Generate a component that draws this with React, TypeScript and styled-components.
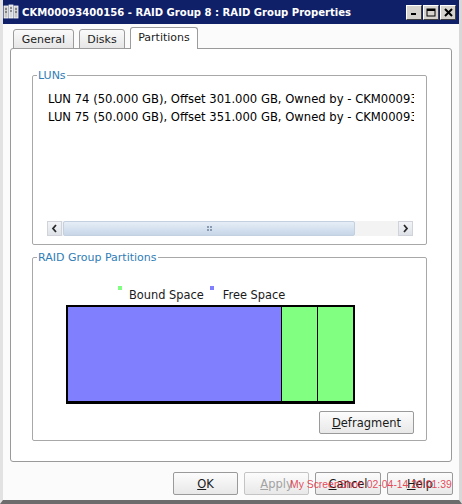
import styled, { createGlobalStyle } from "styled-components";

const GlobalStyle = createGlobalStyle`
    html, body {
        margin: 0;
        padding: 0;
        background: #ffffff;
    }
    body {
        font-family: "DejaVu Sans", Verdana, sans-serif;
        font-size: 11px;
        color: #000000;
    }
    * {
        box-sizing: border-box;
    }
`;

const Window = styled.div`
    position: relative;
    width: 462px;
    height: 504px;
    display: flex;
    flex-direction: column;
    background: #fbfbfb;
    border-left: 3px solid #e2e2e2;
    border-right: 3px solid #d8d8d8;
    border-bottom: 4px solid #6c6c6c;
    overflow: hidden;
`;

const TitleBar = styled.div`
    height: 24px;
    margin: 0 -3px;
    padding: 0 4px 0 3px;
    display: flex;
    align-items: center;
    background: #0f1f68;
    color: #ffffff;
    font-family: "DejaVu Sans Condensed", "DejaVu Sans", sans-serif;
    font-weight: bold;
    font-size: 11.2px;
`;

const TitleText = styled.span`
    flex: 1;
    margin-left: 3px;
    white-space: nowrap;
`;

const CaptionButtons = styled.div`
    display: flex;
    gap: 1px;
    margin-right: 2px;
`;

const CaptionButton = styled.div`
    width: 16px;
    height: 15px;
    background: #d6d3ce;
    border: 1px solid;
    border-color: #ffffff #404040 #404040 #ffffff;
    display: flex;
    align-items: center;
    justify-content: center;
`;

const Body = styled.div`
    flex: 1;
    display: flex;
    flex-direction: column;
    padding: 3px 7px 0 7px;
`;

const TabRow = styled.div`
    display: flex;
    align-items: flex-end;
    gap: 5px;
    padding-left: 3px;
    height: 22px;
    position: relative;
    z-index: 1;
    margin-bottom: -1px;
`;

const Tab = styled.div<{ $active?: boolean; $w: number }>`
    width: ${ p => p.$w }px;
    height: ${ p => p.$active ? '22px' : '20px' };
    display: flex;
    justify-content: center;
    align-items: ${ p => p.$active ? 'flex-start' : 'center' };
    padding-top: ${ p => p.$active ? '3px' : '1px' };
    border: 1px solid #9c9c9c;
    border-bottom: ${ p => p.$active ? 'none' : '1px solid #9c9c9c' };
    border-radius: 3px 3px 0 0;
    background: ${ p => p.$active ? '#ffffff' : 'linear-gradient(#fafafa, #e6e6e6)' };
    color: #1c1c1c;
    white-space: nowrap;
`;

const TabPanel = styled.div`
    height: 414px;
    border: 1px solid #9a9a9a;
    border-radius: 3px;
    background: #ffffff;
    padding: 20px 24px 0 21px;
    display: flex;
    flex-direction: column;
`;

const GroupBox = styled.fieldset<{ $top?: number }>`
    margin: ${ p => p.$top ?? 0 }px 0 0 0;
    padding: 0;
    border: 1px solid #a8a8a8;
    border-radius: 2px;
    min-width: 0;
`;

const GroupLabel = styled.legend`
    margin-left: 4px;
    padding: 0 1px;
    color: #2f7db6;
    line-height: 13px;
`;

const LunList = styled.div`
    height: 139px;
    margin: 0 12px 0 15px;
    padding-top: 8px;
    overflow: hidden;
    white-space: nowrap;
    font-size: 11.6px;
`;

const LunRow = styled.div`
    line-height: 18px;
`;

const ScrollBar = styled.div`
    height: 15px;
    margin: 0 13px 8px 14px;
    display: flex;
    background: #f3f3f3;
`;

const ScrollArrow = styled.div`
    width: 15px;
    height: 15px;
    background: linear-gradient(#f2f4f7, #dfe3e9);
    border: 1px solid #d0d4da;
    display: flex;
    align-items: center;
    justify-content: center;
`;

const ScrollTrack = styled.div`
    flex: 1;
    display: flex;
    padding: 0 1px;
`;

const ScrollThumb = styled.div`
    width: 292px;
    height: 15px;
    border: 1px solid #c2d0e0;
    border-radius: 2px;
    background: linear-gradient(#e6eef7, #c7d6e8);
    display: flex;
    align-items: center;
    justify-content: center;
`;

const LegendRow = styled.div`
    display: flex;
    align-items: flex-start;
    padding: 24px 0 0 85px;
    line-height: 14px;
    font-size: 11.4px;
    color: #1a1a1a;
`;

const Swatch = styled.div<{ $color: string; $gap: number }>`
    width: 4px;
    height: 4px;
    margin-top: -2px;
    margin-left: ${ p => p.$gap }px;
    margin-right: ${ p => p.$gap === 0 ? 7 : 9 }px;
    background: ${ p => p.$color };
`;

const Bar = styled.div`
    margin: 3px 0 0 33px;
    width: 289px;
    height: 99px;
    display: flex;
    border: 2px solid #000000;
    border-bottom-width: 3px;
`;

const Segment = styled.div<{ $color: string; $width: number }>`
    width: ${ p => p.$width }px;
    background: ${ p => p.$color };
    & + & {
        border-left: 1px solid #000000;
    }
`;

const ButtonRow = styled.div<{ $pad?: number }>`
    display: flex;
    justify-content: flex-end;
    gap: 6px;
    padding-right: ${ p => p.$pad ?? 0 }px;
`;

const DefragRow = styled(ButtonRow)`
    margin-top: 7px;
    padding-bottom: 6px;
`;

const Button = styled.div<{ $w: number; $disabled?: boolean }>`
    width: ${ p => p.$w }px;
    height: 23px;
    display: flex;
    align-items: center;
    justify-content: center;
    border: 1px solid ${ p => p.$disabled ? '#c4c4c4' : '#9a9a9a' };
    border-radius: 2px;
    background: linear-gradient(#fcfcfc, #e8e8e8);
    color: ${ p => p.$disabled ? '#a2a2a2' : '#1a1a1a' };
    font-size: 11.5px;
`;

const Footer = styled(ButtonRow)`
    margin-top: 10px;
    margin-right: -1px;
`;

const Watermark = styled.div`
    position: absolute;
    left: 287px;
    top: 479px;
    font-family: "Liberation Sans", Arial, sans-serif;
    font-size: 10.4px;
    color: rgba(226, 40, 60, 0.85);
    white-space: nowrap;
    pointer-events: none;
`;

function AppIcon() {
    return (
        <svg width="16" height="16" viewBox="0 0 16 16">
            <rect x="1" y="2" width="4" height="12" fill="#c8c8c8" stroke="#ffffff" strokeWidth="0.8" />
            <rect x="6" y="1" width="4" height="13" fill="#d8d8d8" stroke="#ffffff" strokeWidth="0.8" />
            <rect x="11" y="2" width="4" height="12" fill="#c8c8c8" stroke="#ffffff" strokeWidth="0.8" />
            <path d="M2 5h2M7 4h2M12 5h2M2 8h2M7 7h2M12 8h2" stroke="#404040" strokeWidth="1" />
        </svg>
    );
}

function Chevron({ dir }: { dir: 'left' | 'right' }) {
    return (
        <svg width="7" height="9" viewBox="0 0 7 9">
            <path
                d={ dir === 'left' ? "M5 1L2 4.5L5 8" : "M2 1L5 4.5L2 8" }
                stroke="#2a2a2a"
                strokeWidth="1.8"
                fill="none"
            />
        </svg>
    );
}

function App() {
    return (
        <>
            <GlobalStyle />
            <Window>
                <TitleBar>
                    <AppIcon />
                    <TitleText>CKM00093400156 - RAID Group 8 : RAID Group Properties</TitleText>
                    <CaptionButtons>
                        <CaptionButton>
                            <svg width="8" height="8" viewBox="0 0 8 8"><rect x="1" y="5" width="5" height="2" fill="#000" /></svg>
                        </CaptionButton>
                        <CaptionButton>
                            <svg width="10" height="9" viewBox="0 0 10 9"><rect x="1" y="1" width="8" height="7" fill="none" stroke="#000" strokeWidth="1" /><rect x="1" y="1" width="8" height="2" fill="#000" /></svg>
                        </CaptionButton>
                        <CaptionButton>
                            <svg width="9" height="9" viewBox="0 0 9 9"><path d="M1 1L8 8M8 1L1 8" stroke="#000" strokeWidth="2" /></svg>
                        </CaptionButton>
                    </CaptionButtons>
                </TitleBar>
                <Body>
                    <TabRow>
                        <Tab $w={ 61 }>General</Tab>
                        <Tab $w={ 46 }>Disks</Tab>
                        <Tab $w={ 68 } $active>Partitions</Tab>
                    </TabRow>
                    <TabPanel>
                        <GroupBox>
                            <GroupLabel>LUNs</GroupLabel>
                            <LunList>
                                <LunRow>LUN 74 (50.000 GB), Offset 301.000 GB, Owned by - CKM00093400156</LunRow>
                                <LunRow>LUN 75 (50.000 GB), Offset 351.000 GB, Owned by - CKM00093400156</LunRow>
                            </LunList>
                            <ScrollBar>
                                <ScrollArrow><Chevron dir="left" /></ScrollArrow>
                                <ScrollTrack>
                                    <ScrollThumb>
                                        <svg width="5" height="5" viewBox="0 0 5 5">
                                            <rect x="0" y="0" width="2" height="2" fill="#8a9ab0" />
                                            <rect x="3" y="0" width="2" height="2" fill="#8a9ab0" />
                                            <rect x="0" y="3" width="2" height="2" fill="#8a9ab0" />
                                            <rect x="3" y="3" width="2" height="2" fill="#8a9ab0" />
                                        </svg>
                                    </ScrollThumb>
                                </ScrollTrack>
                                <ScrollArrow><Chevron dir="right" /></ScrollArrow>
                            </ScrollBar>
                        </GroupBox>
                        <GroupBox $top={ 6 }>
                            <GroupLabel>RAID Group Partitions</GroupLabel>
                            <LegendRow>
                                <Swatch $color="#80ff80" $gap={ 0 } />
                                <span>Bound Space</span>
                                <Swatch $color="#8080ff" $gap={ 6 } />
                                <span>Free Space</span>
                            </LegendRow>
                            <Bar>
                                <Segment $color="#8080ff" $width={ 213 } />
                                <Segment $color="#80ff80" $width={ 36 } />
                                <Segment $color="#80ff80" $width={ 36 } />
                            </Bar>
                            <DefragRow $pad={ 12 }>
                                <Button $w={ 95 }><span><u>D</u>efragment</span></Button>
                            </DefragRow>
                        </GroupBox>
                    </TabPanel>
                    <Footer>
                        <Button $w={ 65 }><span><u>O</u>K</span></Button>
                        <Button $w={ 65 } $disabled><span><u>A</u>pply</span></Button>
                        <Button $w={ 66 }><span><u>C</u>ancel</span></Button>
                        <Button $w={ 66 }><span><u>H</u>elp</span></Button>
                    </Footer>
                </Body>
                <Watermark>My ScreenShot: 02-04-14 20:01:39</Watermark>
            </Window>
        </>
    );
}

export default App;
